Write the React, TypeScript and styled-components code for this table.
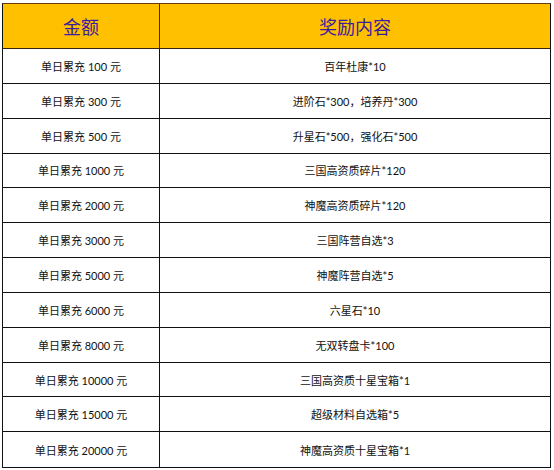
import React from 'react';
import styled, { createGlobalStyle } from 'styled-components';

const GlobalStyle = createGlobalStyle`
  html, body { margin: 0; padding: 0; background: #ffffff; }
  body { font-family: Lato, "Noto Sans CJK SC", sans-serif; }
`;

const rewards: [string, string][] = [
  ['100', '百年杜康*10'],
  ['300', '进阶石*300，培养丹*300'],
  ['500', '升星石*500，强化石*500'],
  ['1000', '三国高资质碎片*120'],
  ['2000', '神魔高资质碎片*120'],
  ['3000', '三国阵营自选*3'],
  ['5000', '神魔阵营自选*5'],
  ['6000', '六星石*10'],
  ['8000', '无双转盘卡*100'],
  ['10000', '三国高资质十星宝箱*1'],
  ['15000', '超级材料自选箱*5'],
  ['20000', '神魔高资质十星宝箱*1'],
];

const Page = styled.div`
  padding: 3px 3px 0 2px;
`;

const Table = styled.div`
  width: 549px;
  display: grid;
  grid-template-columns: 157px 1fr;
  grid-template-rows: 45px repeat(12, 34.85px);
  border: 1.5px solid #111;
  border-top-color: #6b3a12;
  box-sizing: border-box;
`;

const HeadCell = styled.div<{ last?: boolean }>`
  background: #ffc000;
  color: #3a1e9e;
  font-size: 18px;
  display: flex;
  align-items: center;
  justify-content: center;
  border-bottom: 1.5px solid #3a2410;
  border-right: ${({ last }) => (last ? 'none' : '1.5px solid #4a2a12')};
`;

const Cell = styled.div<{ last?: boolean; bottom?: boolean }>`
  font-size: 11px;
  color: #111;
  display: flex;
  align-items: center;
  justify-content: center;
  border-bottom: ${({ bottom }) => (bottom ? 'none' : '1.5px solid #111')};
  border-right: ${({ last }) => (last ? 'none' : '1.5px solid #111')};
`;

export default function App() {
  return (
    <Page>
      <GlobalStyle />
      <Table>
        <HeadCell>金额</HeadCell>
        <HeadCell last>奖励内容</HeadCell>
        {rewards.map(([amount, reward], i) => {
          const bottom = i === rewards.length - 1;
          return (
            <React.Fragment key={amount}>
              <Cell bottom={bottom}>单日累充 {amount} 元</Cell>
              <Cell last bottom={bottom}>{reward}</Cell>
            </React.Fragment>
          );
        })}
      </Table>
    </Page>
  );
}
